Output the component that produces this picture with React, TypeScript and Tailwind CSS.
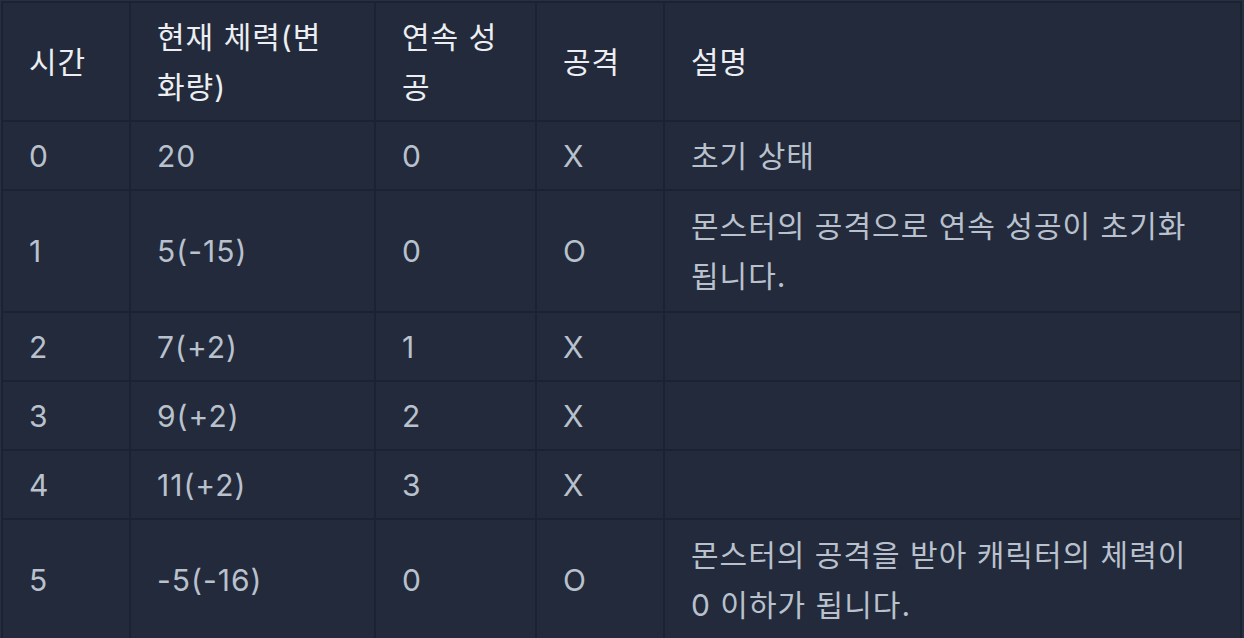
const rows = [
  { t: '0', hp: '20', streak: '0', atk: 'X', desc: '초기 상태', tall: false },
  { t: '1', hp: '5(-15)', streak: '0', atk: 'O', desc: '몬스터의 공격으로 연속 성공이 초기화 됩니다.', tall: true },
  { t: '2', hp: '7(+2)', streak: '1', atk: 'X', desc: '', tall: false },
  { t: '3', hp: '9(+2)', streak: '2', atk: 'X', desc: '', tall: false },
  { t: '4', hp: '11(+2)', streak: '3', atk: 'X', desc: '', tall: false },
  { t: '5', hp: '-5(-16)', streak: '0', atk: 'O', desc: '몬스터의 공격을 받아 캐릭터의 체력이 0 이하가 됩니다.', tall: true },
];

const App = () => {
  return (
    <div className="w-[1244px] h-[638px] overflow-hidden bg-[#263043] pl-[1px] pt-[1px] font-['Inter','Noto_Sans_CJK_KR',sans-serif] text-[30px] tracking-[1px] leading-[50px]">
      <table className="w-[1241px] table-fixed border-collapse bg-[#222a3b] border-2 border-[#1b2231]">
        <colgroup>
          <col className="w-[128px]" />
          <col className="w-[245px]" />
          <col className="w-[161px]" />
          <col className="w-[128px]" />
          <col />
        </colgroup>
        <thead>
          <tr className="h-[119px] text-[#eceef2] text-left">
            <th className="border-2 border-[#1b2231] px-[26px] py-[8px] font-normal">시간</th>
            <th className="border-2 border-[#1b2231] pl-[26px] pr-[36px] py-[8px] font-normal">현재 체력(변화량)</th>
            <th className="border-2 border-[#1b2231] px-[26px] py-[8px] font-normal">연속 성공</th>
            <th className="border-2 border-[#1b2231] px-[26px] py-[8px] font-normal">공격</th>
            <th className="border-2 border-[#1b2231] px-[26px] py-[8px] font-normal">설명</th>
          </tr>
        </thead>
        <tbody className="text-[#b9c1cd]">
          {rows.map((r) => (
            <tr key={r.t} className={r.tall ? 'h-[122px]' : 'h-[69px]'}>
              <td className="border-2 border-[#1b2231] px-[26px] py-[8px]">{r.t}</td>
              <td className="border-2 border-[#1b2231] px-[26px] py-[8px]">{r.hp}</td>
              <td className="border-2 border-[#1b2231] px-[26px] py-[8px]">{r.streak}</td>
              <td className="border-2 border-[#1b2231] px-[26px] py-[8px]">{r.atk}</td>
              <td className="border-2 border-[#1b2231] pl-[26px] pr-[40px] py-[8px] break-keep">{r.desc}</td>
            </tr>
          ))}
        </tbody>
      </table>
    </div>
  );
};

export default App;
